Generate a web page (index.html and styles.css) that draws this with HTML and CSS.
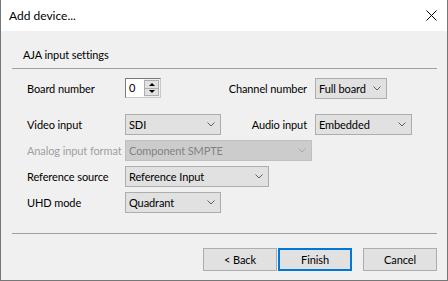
FILE: index.html
```html
<!DOCTYPE html>
<html lang="en">
<head>
    <meta charset="UTF-8">
    <title>Add device...</title>
    <link rel="stylesheet" href="styles.css">
</head>
<body>
    <div class="window">
        <div class="titlebar">
            <span class="title">Add device...</span>
            <svg class="close" width="11" height="11" viewBox="0 0 11 11">
                <path d="M0.5 0.5 L10.5 10.5 M10.5 0.5 L0.5 10.5" stroke="#000" stroke-width="1" fill="none"/>
            </svg>
        </div>

        <div class="content">
            <div class="group-title">AJA input settings</div>
            <div class="rule"></div>

            <div class="form">
                <span class="lbl">Board number</span>
                <div class="spin">
                    <div class="spin-value">0</div>
                    <div class="spin-btns">
                        <div class="spin-btn"><span class="tri-up"></span></div>
                        <div class="spin-btn"><span class="tri-down"></span></div>
                    </div>
                </div>
                <span class="lbl right">Channel number</span>
                <div class="combo w-channel">Full board<svg class="chev" width="8" height="5" viewBox="0 0 8 5"><path d="M0.5 0.5 L4 4 L7.5 0.5" stroke="#606060" fill="none"/></svg></div>

                <span class="lbl">Video input</span>
                <div class="combo w-small">SDI<svg class="chev" width="8" height="5" viewBox="0 0 8 5"><path d="M0.5 0.5 L4 4 L7.5 0.5" stroke="#606060" fill="none"/></svg></div>
                <span class="lbl right">Audio input</span>
                <div class="combo w-audio">Embedded<svg class="chev" width="8" height="5" viewBox="0 0 8 5"><path d="M0.5 0.5 L4 4 L7.5 0.5" stroke="#606060" fill="none"/></svg></div>

                <span class="lbl disabled">Analog input format</span>
                <div class="combo combo-disabled span2 w-analog">Component SMPTE<svg class="chev" width="8" height="5" viewBox="0 0 8 5"><path d="M0.5 0.5 L4 4 L7.5 0.5" stroke="#a8a8a8" fill="none"/></svg></div>

                <span class="lbl">Reference source</span>
                <div class="combo span2 w-ref">Reference Input<svg class="chev" width="8" height="5" viewBox="0 0 8 5"><path d="M0.5 0.5 L4 4 L7.5 0.5" stroke="#606060" fill="none"/></svg></div>

                <span class="lbl">UHD mode</span>
                <div class="combo w-small">Quadrant<svg class="chev" width="8" height="5" viewBox="0 0 8 5"><path d="M0.5 0.5 L4 4 L7.5 0.5" stroke="#606060" fill="none"/></svg></div>
            </div>

            <div class="rule rule-bottom"></div>

            <div class="buttons">
                <button class="btn">&lt; Back</button>
                <button class="btn btn-default">Finish</button>
                <button class="btn btn-cancel">Cancel</button>
            </div>
        </div>
    </div>
</body>
</html>
```

FILE: styles.css
```css
html, body {
    margin: 0;
    padding: 0;
}
body {
    font-family: Lato, "Noto Sans", sans-serif;
    font-size: 11px;
    letter-spacing: -0.1px;
    color: #000;
    background: #f0f0f0;
}
.window {
    width: 448px;
    height: 281px;
    box-sizing: border-box;
    border: 1px solid #777;
    border-top: none;
    background: #f0f0f0;
}
.titlebar {
    height: 31px;
    background: #fff;
    display: flex;
    align-items: center;
    justify-content: space-between;
    padding: 0 10px 0 8px;
}
.title {
    font-size: 12px;
    letter-spacing: 0;
    margin-top: -1px;
}
.close {
    display: block;
}
.content {
    padding: 0 10px 0 11px;
}
.group-title {
    margin: 15px 0 0 11px;
    line-height: 17px;
}
.rule {
    height: 1px;
    background: #a0a0a0;
    margin-top: 5px;
}
.form {
    display: grid;
    grid-template-columns: 98px 95px 95px auto;
    grid-template-rows: 31px 21px 21px 21px 21px;
    row-gap: 5px;
    margin: 9px 0 0 15px;
    align-items: start;
}
.lbl {
    grid-column: 1;
    height: 21px;
    line-height: 21px;
    white-space: nowrap;
}
.lbl.right {
    grid-column: 3;
    text-align: right;
    padding-right: 8px;
}
.lbl.disabled {
    color: #a0a0a0;
}
.spin {
    display: flex;
    width: 36px;
    height: 20px;
    box-sizing: border-box;
    border: 1px solid #7a7a7a;
    border-right-color: #c8c8c8;
    border-bottom-color: #c8c8c8;
    background: #fff;
}
.spin-value {
    flex: 1;
    padding-left: 3px;
    line-height: 17px;
}
.spin-btns {
    display: flex;
    flex-direction: column;
    width: 16px;
    padding: 1px 1px 1px 0;
    box-sizing: border-box;
    background: #f0f0f0;
}
.spin-btn {
    flex: 1;
    border: 1px solid #adadad;
    background: #e1e1e1;
    display: flex;
    align-items: center;
    justify-content: center;
}
.spin-btn + .spin-btn {
    border-top: none;
}
.tri-up {
    width: 0;
    height: 0;
    border-left: 3px solid transparent;
    border-right: 3px solid transparent;
    border-bottom: 3px solid #000;
}
.tri-down {
    width: 0;
    height: 0;
    border-left: 3px solid transparent;
    border-right: 3px solid transparent;
    border-top: 3px solid #000;
}
.combo {
    height: 21px;
    box-sizing: border-box;
    border: 1px solid #adadad;
    background: #e1e1e1;
    display: flex;
    align-items: center;
    justify-content: space-between;
    padding: 0 5px 0 3px;
    white-space: nowrap;
}
.combo-disabled {
    background: #cccccc;
    border-color: #bfbfbf;
    color: #838383;
}
.span2 {
    grid-column: span 2;
}
.w-small {
    width: 96px;
}
.w-channel {
    width: 72px;
}
.w-audio {
    width: 97px;
}
.w-analog {
    width: 187px;
}
.w-ref {
    width: 144px;
}
.rule-bottom {
    margin-top: 20px;
}
.buttons {
    display: flex;
    justify-content: flex-end;
    margin-top: 14px;
}
.btn {
    width: 74px;
    height: 23px;
    box-sizing: border-box;
    border: 1px solid #adadad;
    background: #e1e1e1;
    font-family: inherit;
    font-size: 11px;
    letter-spacing: -0.1px;
    color: #000;
    padding: 0;
    margin-left: 1px;
}
.btn-default {
    border: 2px solid #0078d7;
}
.btn-cancel {
    margin-left: 11px;
}
```
